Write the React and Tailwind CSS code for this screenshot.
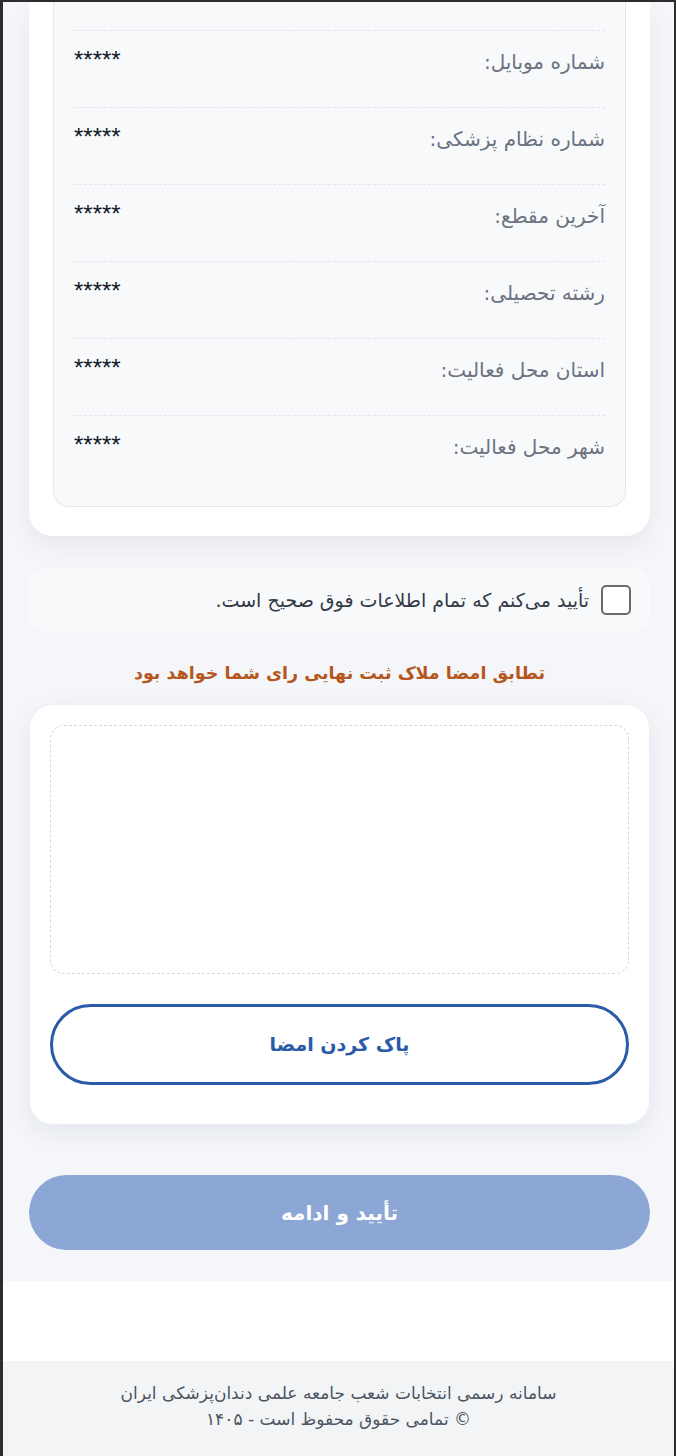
const rows = [
  'شماره موبایل:',
  'شماره نظام پزشکی:',
  'آخرین مقطع:',
  'رشته تحصیلی:',
  'استان محل فعالیت:',
  'شهر محل فعالیت:',
]

function InfoRow({ label }) {
  return (
    <div className="flex justify-between items-start border-t border-dashed border-[#e3e6ec] pt-[17px] pb-[31px]">
      <span className="text-[20px] leading-7 text-[#6b7280]">{label}</span>
      <span className="text-[24px] leading-6 text-[#111827]" dir="ltr" style={{ fontFamily: '"Liberation Sans", sans-serif' }}>*****</span>
    </div>
  )
}

export default function App() {
  return (
    <div dir="rtl" className="min-h-[1456px] bg-[#2d2d2d] pl-[3px] pt-[2px] pr-[2px]"
      style={{ fontFamily: '"DejaVu Sans", "Noto Sans", sans-serif' }}>
      <div className="bg-white min-h-[1454px] flex flex-col">

        {/* Main area */}
        <div className="bg-[#f4f6fa] pl-[26px] pr-6 pb-[31px]">

          {/* Info card (scrolled, top cut off) */}
          <div className="bg-white rounded-b-3xl px-6 pb-[29px] shadow-[0_10px_24px_rgba(15,23,42,0.06)]">
            <div className="bg-[#f8f9fb] border border-t-0 border-[#e5e7eb] rounded-b-2xl px-5 pt-[28px] pb-[14px]">
              {rows.map(r => <InfoRow key={r} label={r} />)}
            </div>
          </div>

          {/* Confirm checkbox */}
          <label className="mt-8 flex items-center gap-3 bg-[#f8f9fb] rounded-2xl px-[19px] h-16">
            <span className="w-[30px] h-[30px] rounded-[5px] border-2 border-[#6b6b6b] bg-white shrink-0" />
            <span className="text-[19px] text-[#333a45]">تأیید می‌کنم که تمام اطلاعات فوق صحیح است.</span>
          </label>

          {/* Notice */}
          <p className="text-center text-[17.5px] font-bold text-[#b5561c] mt-[27px] leading-7">
            تطابق امضا ملاک ثبت نهایی رای شما خواهد بود
          </p>

          {/* Signature card */}
          <div className="mt-[17px] bg-white rounded-3xl p-5 pb-[39px] shadow-[0_8px_24px_rgba(15,23,42,0.07)] border border-[#eef0f4]">
            <div className="h-[249px] rounded-[14px] border border-dashed border-[#d4d8ee] bg-white" />
            <button className="mt-[30px] w-full h-[81px] rounded-full border-[3px] border-[#2a5ba8] text-[#2a5ba8] text-[19px] font-bold bg-white">
              پاک کردن امضا
            </button>
          </div>

          {/* Submit */}
          <button disabled className="mt-[50px] w-full h-[75px] rounded-full bg-[#8ca7d6] text-white text-[20px] font-bold">
            تأیید و ادامه
          </button>
        </div>

        {/* Spacer */}
        <div className="h-20 bg-white" />

        {/* Footer */}
        <footer className="flex-1 bg-[#f3f4f6] pt-[19px] pb-6 text-center text-[17px] leading-[26px] text-[#4b5563]">
          <p>سامانه رسمی انتخابات شعب جامعه علمی دندان‌پزشکی ایران</p>
          <p>© تمامی حقوق محفوظ است - ۱۴۰۵</p>
        </footer>
      </div>
    </div>
  )
}
